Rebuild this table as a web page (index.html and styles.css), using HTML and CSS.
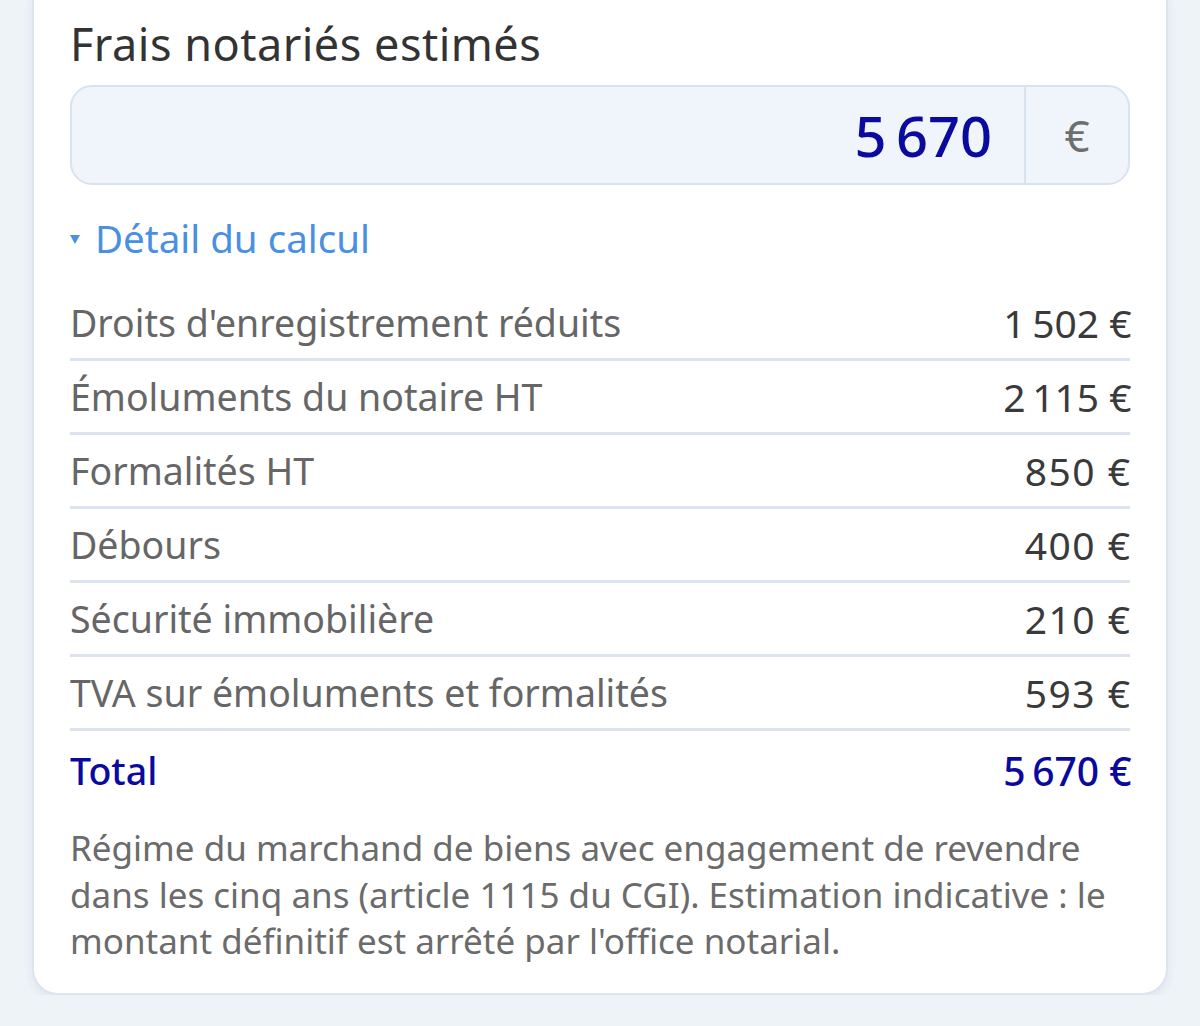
FILE: index.html
```html
<!DOCTYPE html>
<html lang="fr">
<head>
<meta charset="utf-8">
<title>Frais notariés estimés</title>
<link rel="stylesheet" href="styles.css">
</head>
<body>
<section class="card">
  <h2 class="title">Frais notariés estimés</h2>
  <div class="field">
    <div class="field-value">5&#8239;670</div>
    <div class="field-suffix">€</div>
  </div>
  <details class="detail" open>
    <summary class="detail-toggle"><span class="caret"></span>Détail du calcul</summary>
    <div class="rows">
      <div class="row"><span class="row-label">Droits d'enregistrement réduits</span><span class="row-value">1&#8239;502&nbsp;€</span></div>
      <div class="row"><span class="row-label">Émoluments du notaire HT</span><span class="row-value">2&#8239;115&nbsp;€</span></div>
      <div class="row"><span class="row-label">Formalités HT</span><span class="row-value">850&nbsp;€</span></div>
      <div class="row"><span class="row-label">Débours</span><span class="row-value">400&nbsp;€</span></div>
      <div class="row"><span class="row-label">Sécurité immobilière</span><span class="row-value">210&nbsp;€</span></div>
      <div class="row"><span class="row-label">TVA sur émoluments et formalités</span><span class="row-value">593&nbsp;€</span></div>
      <div class="row row-total"><span class="row-label">Total</span><span class="row-value">5&#8239;670&nbsp;€</span></div>
    </div>
    <p class="note">Régime du marchand de biens avec engagement de revendre dans les cinq ans (article 1115 du CGI). Estimation indicative : le montant définitif est arrêté par l'office notarial.</p>
  </details>
</section>
</body>
</html>
```

FILE: styles.css
```css
* { box-sizing: border-box; }

html, body {
  margin: 0;
  padding: 0;
  background: #eef3f8;
  font-family: "Noto Sans", Roboto, "Liberation Sans", sans-serif;
  overflow: hidden;
}

.card {
  margin: -24px 32px 0;
  padding: 38px 36px 28px;
  background: #ffffff;
  border: 2px solid #dce5ef;
  border-radius: 26px;
  box-shadow: 0 4px 10px rgba(40, 70, 110, 0.08);
}

.title {
  margin: 0;
  font-size: 45px;
  line-height: 56px;
  font-weight: 400;
  color: #333333;
  letter-spacing: 0.5px;
}

.field {
  margin-top: 13px;
  height: 100px;
  display: flex;
  align-items: stretch;
  background: #eff5fb;
  border: 2px solid #d9e3ee;
  border-radius: 22px;
}

.field-value {
  flex: 1;
  display: flex;
  align-items: center;
  justify-content: flex-end;
  padding-right: 32px;
  font-size: 56px;
  font-weight: 500;
  color: #0a0a9e;
}

.field-suffix {
  width: 104px;
  display: flex;
  align-items: center;
  justify-content: center;
  border-left: 2px solid #d9e3ee;
  font-size: 44px;
  color: #6e6e6e;
}

.detail { margin-top: 28px; }

.detail-toggle {
  list-style: none;
  display: flex;
  align-items: center;
  font-size: 38.5px;
  line-height: 50px;
  color: #4a90e2;
  cursor: pointer;
  margin-bottom: 24px;
}
.detail-toggle::-webkit-details-marker { display: none; }

.caret {
  width: 0;
  height: 0;
  border-left: 5px solid transparent;
  border-right: 5px solid transparent;
  border-top: 9px solid #4a90e2;
  margin-right: 15px;
  margin-top: 2px;
}

.rows { display: flex; flex-direction: column; }

.row {
  display: flex;
  justify-content: space-between;
  align-items: center;
  padding: 13px 0;
  line-height: 45px;
  font-size: 37.5px;
  border-bottom: 3px solid #dce5ef;
}

.row-label { color: #666666; }
.row-value { color: #3a3a3a; font-size: 39px; letter-spacing: 1.5px; margin-right: -1.5px; }

.row-total {
  border-bottom: none;
  padding: 16px 0;
  line-height: 48px;
}
.row-total .row-label,
.row-total .row-value {
  color: #0a0a9e;
  font-weight: 500;
}

.note {
  margin: 14px 0 0;
  font-size: 35px;
  line-height: 46.5px;
  color: #6b6b6b;
}
```
